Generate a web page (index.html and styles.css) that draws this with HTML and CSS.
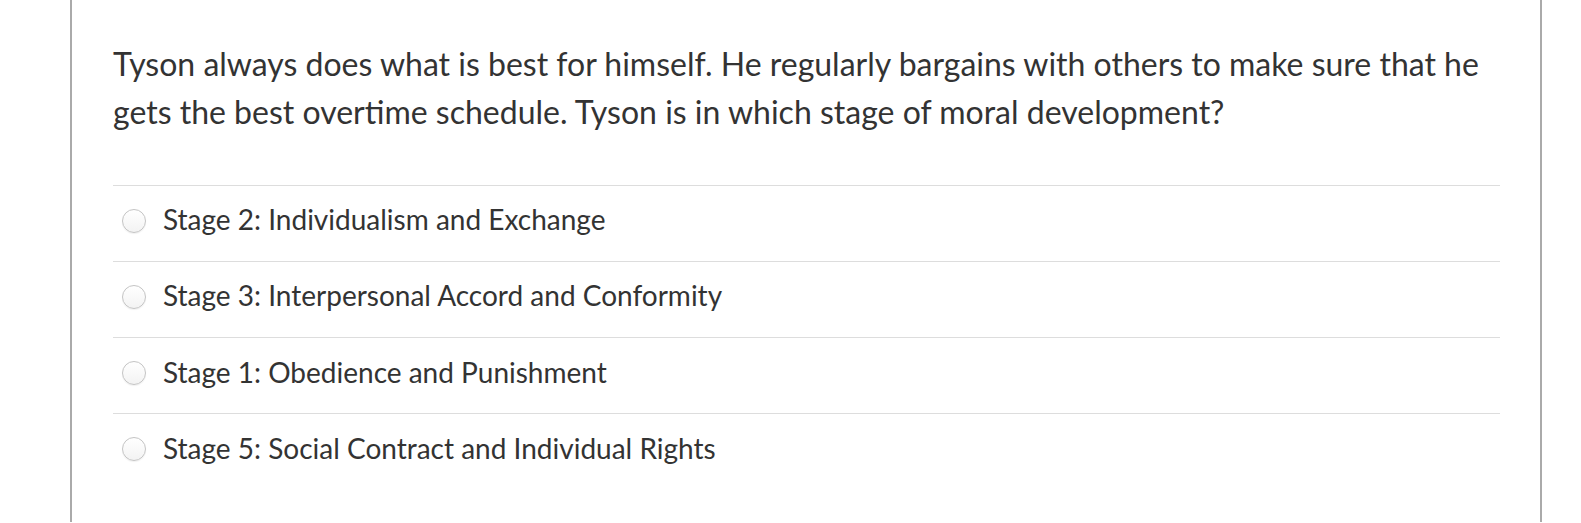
FILE: index.html
```html
<!DOCTYPE html>
<html>
<head>
<meta charset="utf-8">
<link rel="stylesheet" href="styles.css">
</head>
<body>
<div class="card">
  <div class="question">Tyson always does what is best for himself. He regularly bargains with others to make sure that he gets the best overtime schedule. Tyson is in which stage of moral development?</div>
  <div class="answers">
    <label class="answer"><span class="radio"></span><span class="label">Stage 2: Individualism and Exchange</span></label>
    <label class="answer"><span class="radio"></span><span class="label">Stage 3: Interpersonal Accord and Conformity</span></label>
    <label class="answer"><span class="radio"></span><span class="label">Stage 1: Obedience and Punishment</span></label>
    <label class="answer"><span class="radio"></span><span class="label">Stage 5: Social Contract and Individual Rights</span></label>
  </div>
</div>
</body>
</html>
```
FILE: styles.css
```css
html, body {
  margin: 0;
  padding: 0;
  background: #fff;
}
body {
  font-family: Lato, "Open Sans", sans-serif;
  color: #333;
  height: 523px;
  overflow: hidden;
}
.card {
  margin-left: 70px;
  width: 1387px;
  height: 482px;
  border-left: 2px solid #aaaaaa;
  border-right: 2px solid #aaaaaa;
  padding: 40px 40px 0 41px;
  overflow: hidden;
}
.question {
  font-size: 32px;
  line-height: 48px;
  margin-bottom: 48.5px;
}
.answers {
  display: flex;
  flex-direction: column;
}
.answer {
  display: flex;
  align-items: center;
  border-top: 1px solid #dddddd;
  padding: 14.8px 0 21.4px 9px;
  font-size: 28px;
  line-height: 39px;
}
.radio {
  width: 22px;
  height: 22px;
  border: 1px solid #c4c4c4;
  border-radius: 50%;
  background: linear-gradient(#ffffff, #f3f3f3);
  box-shadow: 0 1px 1px rgba(0,0,0,0.06);
  margin-right: 17px;
  flex: none;
  position: relative;
  top: 1px;
}
```
